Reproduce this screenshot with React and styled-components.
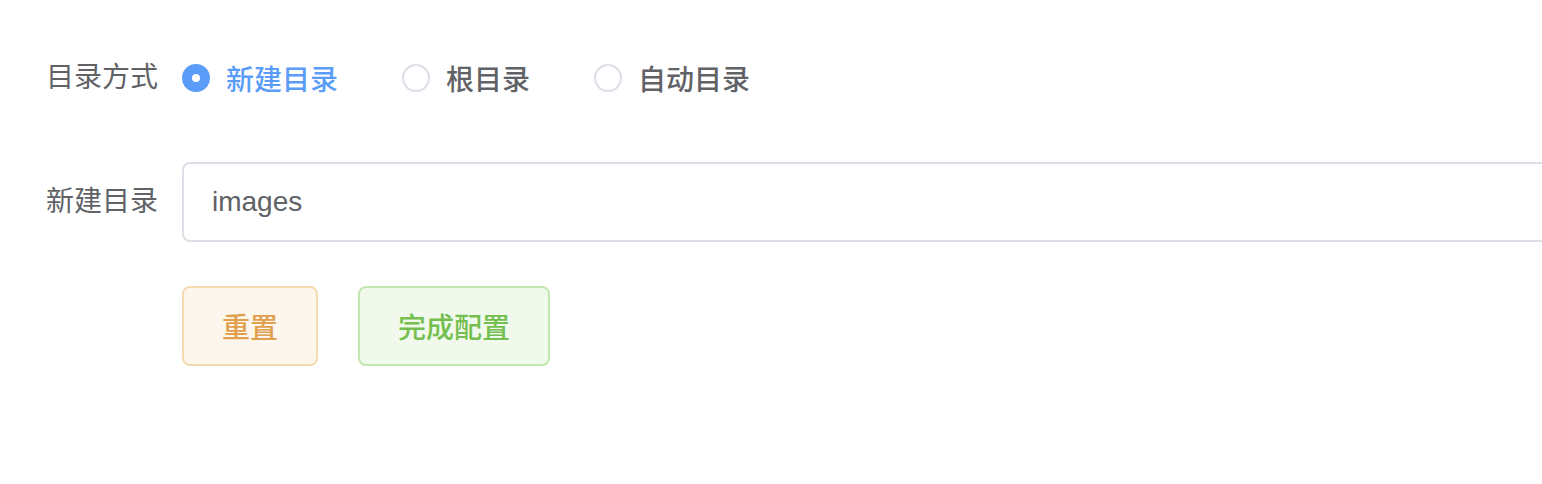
import React, { useState } from "react";
import styled, { createGlobalStyle } from "styled-components";

const GlobalStyle = createGlobalStyle`
  html, body {
    margin: 0;
    padding: 0;
    background: #fff;
  }
  body {
    font-family: "Liberation Sans", "Noto Sans CJK SC", sans-serif;
  }
`;

const Form = styled.form`
  padding-top: 38px;
  display: flex;
  flex-direction: column;
  gap: 44px;
`;

const FormItem = styled.div`
  display: flex;
  align-items: center;
  height: 80px;
`;

const Label = styled.label`
  width: 182px;
  flex-shrink: 0;
  box-sizing: border-box;
  padding-right: 24px;
  text-align: right;
  font-size: 28px;
  color: #606266;
  line-height: 80px;
`;

const Content = styled.div`
  flex: 1;
  display: flex;
  align-items: center;
  gap: ${(p) => p.gap || 0}px;
  min-width: 0;
`;

const RadioGroup = styled.div`
  display: flex;
  align-items: center;
`;

const RadioItem = styled.label`
  display: flex;
  align-items: center;
  margin-right: 64px;
  cursor: pointer;
`;

const RadioCircle = styled.span`
  width: 28px;
  height: 28px;
  box-sizing: border-box;
  border-radius: 50%;
  border: 2px solid ${(p) => (p.checked ? "#5a9cf8" : "#dcdfe6")};
  background: ${(p) => (p.checked ? "#5a9cf8" : "#fff")};
  display: flex;
  align-items: center;
  justify-content: center;
  &::after {
    content: "";
    width: 8px;
    height: 8px;
    border-radius: 50%;
    background: #fff;
    display: ${(p) => (p.checked ? "block" : "none")};
  }
`;

const RadioText = styled.span`
  margin-left: 16px;
  font-size: 28px;
  font-weight: 500;
  color: ${(p) => (p.checked ? "#5a9cf8" : "#606266")};
`;

const Input = styled.input`
  width: 100%;
  height: 80px;
  box-sizing: border-box;
  border: 2px solid #dcdfe6;
  border-right: none;
  border-radius: 8px 0 0 8px;
  padding: 0 28px;
  font-family: "Liberation Sans", "Noto Sans CJK SC", sans-serif;
  font-size: 28px;
  color: #606266;
  outline: none;
`;

const Button = styled.button`
  height: 80px;
  box-sizing: border-box;
  padding: 0 38px;
  border-radius: 8px;
  border: 2px solid ${(p) => p.border};
  background: ${(p) => p.bg};
  color: ${(p) => p.color};
  font-family: "Liberation Sans", "Noto Sans CJK SC", sans-serif;
  font-size: 28px;
  font-weight: 500;
  cursor: pointer;
`;

const options = ["新建目录", "根目录", "自动目录"];

export default function App() {
  const [mode, setMode] = useState("新建目录");
  const [dir, setDir] = useState("images");

  return (
    <>
      <GlobalStyle />
      <Form onSubmit={(e) => e.preventDefault()}>
        <FormItem>
          <Label>目录方式</Label>
          <Content>
            <RadioGroup>
              {options.map((o) => (
                <RadioItem key={o} onClick={() => setMode(o)}>
                  <RadioCircle checked={mode === o} />
                  <RadioText checked={mode === o}>{o}</RadioText>
                </RadioItem>
              ))}
            </RadioGroup>
          </Content>
        </FormItem>
        <FormItem>
          <Label>新建目录</Label>
          <Content>
            <Input value={dir} onChange={(e) => setDir(e.target.value)} />
          </Content>
        </FormItem>
        <FormItem>
          <Label />
          <Content gap={40}>
            <Button
              type="button"
              color="#e0a04e"
              bg="#fdf6ec"
              border="#f5dab1"
              onClick={() => setDir("")}
            >
              重置
            </Button>
            <Button type="submit" color="#74bf4f" bg="#f0f9eb" border="#c2e7b0">
              完成配置
            </Button>
          </Content>
        </FormItem>
      </Form>
    </>
  );
}
